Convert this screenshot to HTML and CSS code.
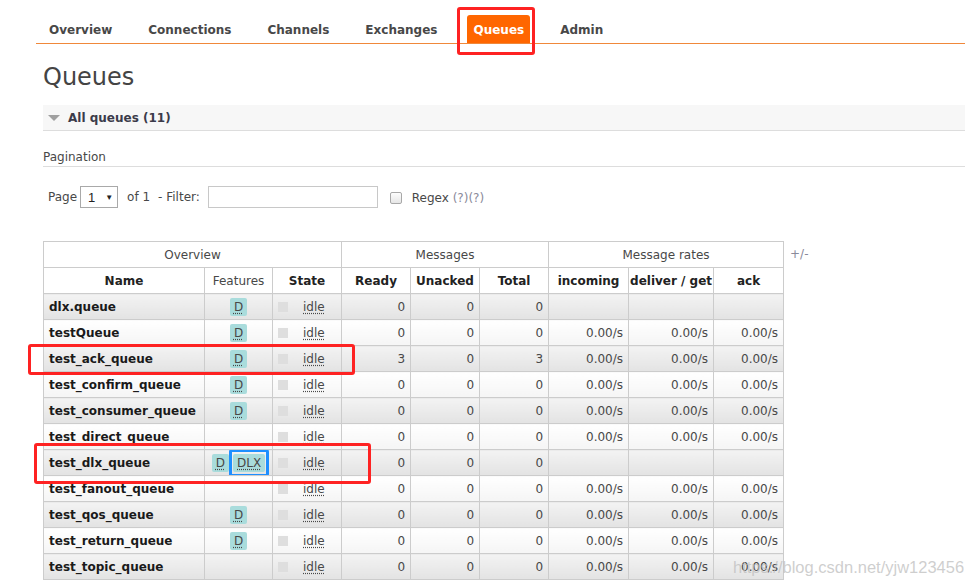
FILE: index.html
```html
<!DOCTYPE html>
<html>
<head>
<meta charset="utf-8">
<title>Queues</title>
<link rel="stylesheet" href="styles.css">
</head>
<body>
<div class="nav">
  <ul class="tabs">
    <li><a>Overview</a></li>
    <li><a>Connections</a></li>
    <li><a>Channels</a></li>
    <li><a>Exchanges</a></li>
    <li><a class="active">Queues</a></li>
    <li><a>Admin</a></li>
  </ul>
</div>
<div class="main">
  <h1>Queues</h1>
  <div class="section-bar"><span class="tri"></span>All queues (11)</div>
  <div class="pag-title">Pagination</div>
  <div class="pag-row">
    <span>Page</span>
    <span class="sel">1<span class="arrow">▼</span></span>
    <span class="of">of 1</span>
    <span class="filter">- Filter:</span>
    <span class="input"></span>
    <span class="chk"></span>
    <span class="regex">Regex <span class="help">(?)(?)</span></span>
  </div>
  <div class="table-wrap">
    <table class="list">
      <colgroup>
        <col class="c-name"><col class="c-feat"><col class="c-state">
        <col class="c-num"><col class="c-num"><col class="c-num">
        <col class="c-in"><col class="c-del"><col class="c-ack">
      </colgroup>
      <thead>
        <tr class="group">
          <th colspan="3">Overview</th>
          <th colspan="3">Messages</th>
          <th colspan="3">Message rates</th>
        </tr>
        <tr class="cols">
          <th>Name</th><th class="light">Features</th><th>State</th>
          <th>Ready</th><th>Unacked</th><th>Total</th>
          <th>incoming</th><th>deliver / get</th><th>ack</th>
        </tr>
      </thead>
      <tbody>
        <tr class="alt1"><td class="name">dlx.queue</td><td class="feat"><abbr class="b">D</abbr></td><td class="state"><span class="sq"></span><abbr>idle</abbr></td><td class="n">0</td><td class="n">0</td><td class="n">0</td><td></td><td></td><td></td></tr>
        <tr class="alt2"><td class="name">testQueue</td><td class="feat"><abbr class="b">D</abbr></td><td class="state"><span class="sq"></span><abbr>idle</abbr></td><td class="n">0</td><td class="n">0</td><td class="n">0</td><td class="n">0.00/s</td><td class="n">0.00/s</td><td class="n">0.00/s</td></tr>
        <tr class="alt1"><td class="name">test_ack_queue</td><td class="feat"><abbr class="b">D</abbr></td><td class="state"><span class="sq"></span><abbr>idle</abbr></td><td class="n">3</td><td class="n">0</td><td class="n">3</td><td class="n">0.00/s</td><td class="n">0.00/s</td><td class="n">0.00/s</td></tr>
        <tr class="alt2"><td class="name">test_confirm_queue</td><td class="feat"><abbr class="b">D</abbr></td><td class="state"><span class="sq"></span><abbr>idle</abbr></td><td class="n">0</td><td class="n">0</td><td class="n">0</td><td class="n">0.00/s</td><td class="n">0.00/s</td><td class="n">0.00/s</td></tr>
        <tr class="alt1"><td class="name">test_consumer_queue</td><td class="feat"><abbr class="b">D</abbr></td><td class="state"><span class="sq"></span><abbr>idle</abbr></td><td class="n">0</td><td class="n">0</td><td class="n">0</td><td class="n">0.00/s</td><td class="n">0.00/s</td><td class="n">0.00/s</td></tr>
        <tr class="alt2"><td class="name">test_direct_queue</td><td class="feat"></td><td class="state"><span class="sq"></span><abbr>idle</abbr></td><td class="n">0</td><td class="n">0</td><td class="n">0</td><td class="n">0.00/s</td><td class="n">0.00/s</td><td class="n">0.00/s</td></tr>
        <tr class="alt1"><td class="name">test_dlx_queue</td><td class="feat"><abbr class="b">D</abbr><abbr class="b dlx">DLX</abbr></td><td class="state"><span class="sq"></span><abbr>idle</abbr></td><td class="n">0</td><td class="n">0</td><td class="n">0</td><td></td><td></td><td></td></tr>
        <tr class="alt2"><td class="name">test_fanout_queue</td><td class="feat"></td><td class="state"><span class="sq"></span><abbr>idle</abbr></td><td class="n">0</td><td class="n">0</td><td class="n">0</td><td class="n">0.00/s</td><td class="n">0.00/s</td><td class="n">0.00/s</td></tr>
        <tr class="alt1"><td class="name">test_qos_queue</td><td class="feat"><abbr class="b">D</abbr></td><td class="state"><span class="sq"></span><abbr>idle</abbr></td><td class="n">0</td><td class="n">0</td><td class="n">0</td><td class="n">0.00/s</td><td class="n">0.00/s</td><td class="n">0.00/s</td></tr>
        <tr class="alt2"><td class="name">test_return_queue</td><td class="feat"><abbr class="b">D</abbr></td><td class="state"><span class="sq"></span><abbr>idle</abbr></td><td class="n">0</td><td class="n">0</td><td class="n">0</td><td class="n">0.00/s</td><td class="n">0.00/s</td><td class="n">0.00/s</td></tr>
        <tr class="alt1"><td class="name">test_topic_queue</td><td class="feat"></td><td class="state"><span class="sq"></span><abbr>idle</abbr></td><td class="n">0</td><td class="n">0</td><td class="n">0</td><td class="n">0.00/s</td><td class="n">0.00/s</td><td class="n">0.00/s</td></tr>
      </tbody>
    </table>
    <span class="plusminus">+/-</span>
  </div>
</div>
<div class="mark mark-tab"></div>
<div class="mark mark-ack"></div>
<div class="mark mark-dlx"></div>
<div class="watermark">https://blog.csdn.net/yjw123456</div>
</body>
</html>
```

FILE: styles.css
```css
html, body {
  margin: 0;
  padding: 0;
  background: #fff;
}
body {
  position: relative;
  width: 965px;
  height: 587px;
  overflow: hidden;
  font-family: "DejaVu Sans", Verdana, sans-serif;
  font-size: 12px;
  color: #484848;
}
.nav {
  margin-left: 36px;
  padding-top: 15px;
  border-bottom: 1px solid #f0883a;
}
.tabs {
  list-style: none;
  margin: 0;
  padding: 0 0 0 7px;
  display: flex;
  gap: 24px;
}
.tabs a {
  display: block;
  box-sizing: border-box;
  height: 28px;
  line-height: 28px;
  padding: 1px 6px 0 6px;
  font-weight: bold;
  font-size: 12px;
  color: #484848;
  border-radius: 3px 3px 0 0;
}
.tabs a.active {
  background: #ff6600;
  color: #fff;
}
.main {
  padding-left: 43px;
}
h1 {
  margin: 18px 0 0 0;
  font-size: 24px;
  line-height: 30px;
  font-weight: normal;
  color: #444;
}
.section-bar {
  margin-top: 13px;
  box-sizing: border-box;
  height: 26px;
  padding-top: 1px;
  background: #f7f7f7;
  border-bottom: 1px solid #ddd;
  font-weight: bold;
  color: #3b3b4a;
  display: flex;
  align-items: center;
}
.tri {
  width: 0;
  height: 0;
  border-left: 6px solid transparent;
  border-right: 6px solid transparent;
  border-top: 6px solid #a0a0a0;
  margin: 0 8px 0 5px;
}
.pag-title {
  margin-top: 18px;
  line-height: 16px;
  padding-bottom: 1px;
  border-bottom: 1px solid #ddd;
}
.pag-row {
  margin-top: 19px;
  padding-left: 5px;
  height: 22px;
  display: flex;
  align-items: center;
}
.sel {
  margin-left: 3px;
  box-sizing: border-box;
  width: 38px;
  height: 22px;
  border: 1px solid #a9a9a9;
  display: flex;
  align-items: center;
  padding-left: 7px;
  font-family: "Liberation Sans", Arial, sans-serif;
  font-size: 13px;
  color: #222;
}
.arrow {
  font-size: 8px;
  margin-left: 10px;
}
.of {
  margin-left: 9px;
}
.filter {
  margin-left: 8px;
}
.input {
  margin-left: 8px;
  box-sizing: border-box;
  width: 170px;
  height: 22px;
  border: 1px solid #c8c8c8;
  background: #fff;
}
.chk {
  margin-left: 12px;
  box-sizing: border-box;
  width: 12px;
  height: 12px;
  border: 1px solid #a8a8a8;
  border-radius: 2px;
  background: linear-gradient(#fdfdfd, #e6e6e6);
  margin-top: 1px;
}
.regex {
  margin-left: 10px;
  margin-top: 2px;
}
.help {
  color: #8a8a9a;
}
.table-wrap {
  margin-top: 33px;
  display: flex;
  align-items: flex-start;
}
table.list {
  border-collapse: collapse;
  table-layout: fixed;
  width: 740px;
}
.c-name { width: 161px; }
.c-feat { width: 68px; }
.c-state { width: 69px; }
.c-num { width: 69px; }
.c-in { width: 80px; }
.c-del { width: 85px; }
.c-ack { width: 70px; }
table.list th, table.list td {
  border: 1px solid #ccc;
  height: 25px;
  padding: 0 5px;
  white-space: nowrap;
  overflow: hidden;
}
table.list th {
  background: #fff;
  text-align: center;
  color: #222;
  font-weight: bold;
  padding: 0 1px;
}
table.list tr.group th {
  font-weight: normal;
  color: #484848;
}
table.list th.light {
  font-weight: normal;
  color: #484848;
}
tr.alt1 td {
  background: linear-gradient(#f3f3f3, #e3e3e3);
}
tr.alt2 td {
  background: linear-gradient(#ffffff, #f5f5f5);
}
td.name {
  font-weight: bold;
  color: #1a1a1a;
}
td.n {
  text-align: right;
}
table.list td.feat {
  text-align: center;
  padding: 0;
}
abbr {
  text-decoration: underline dotted;
  text-underline-offset: 2px;
}
abbr.b {
  display: inline-block;
  height: 18px;
  line-height: 18px;
  padding: 0 4px;
  background: #a9dcdc;
  border-radius: 2px;
  vertical-align: middle;
}
abbr.dlx {
  position: relative;
  margin-left: 4px;
}
abbr.dlx::after {
  content: "";
  position: absolute;
  left: -4px;
  right: -4px;
  top: -5px;
  bottom: -5px;
  border: 3px solid #1e8fff;
  border-radius: 3px;
}
td.state {
  padding-left: 5px;
}
.sq {
  display: inline-block;
  width: 10px;
  height: 10px;
  background: #dedede;
  vertical-align: middle;
  margin-right: 15px;
}
.plusminus {
  margin-left: 6px;
  margin-top: 6px;
  color: #8a8a9a;
}
.mark {
  position: absolute;
  box-sizing: border-box;
  border: 3px solid #fe2222;
  border-radius: 3px;
}
.mark-tab { left: 457px; top: 7px; width: 78px; height: 48px; }
.mark-ack { left: 28px; top: 344px; width: 327px; height: 31px; }
.mark-dlx { left: 34px; top: 443px; width: 337px; height: 41px; }
.watermark {
  position: absolute;
  left: 733px;
  top: 558px;
  font-family: "Liberation Sans", Arial, sans-serif;
  font-size: 16.5px;
  color: rgba(190, 190, 190, 0.75);
}
```
